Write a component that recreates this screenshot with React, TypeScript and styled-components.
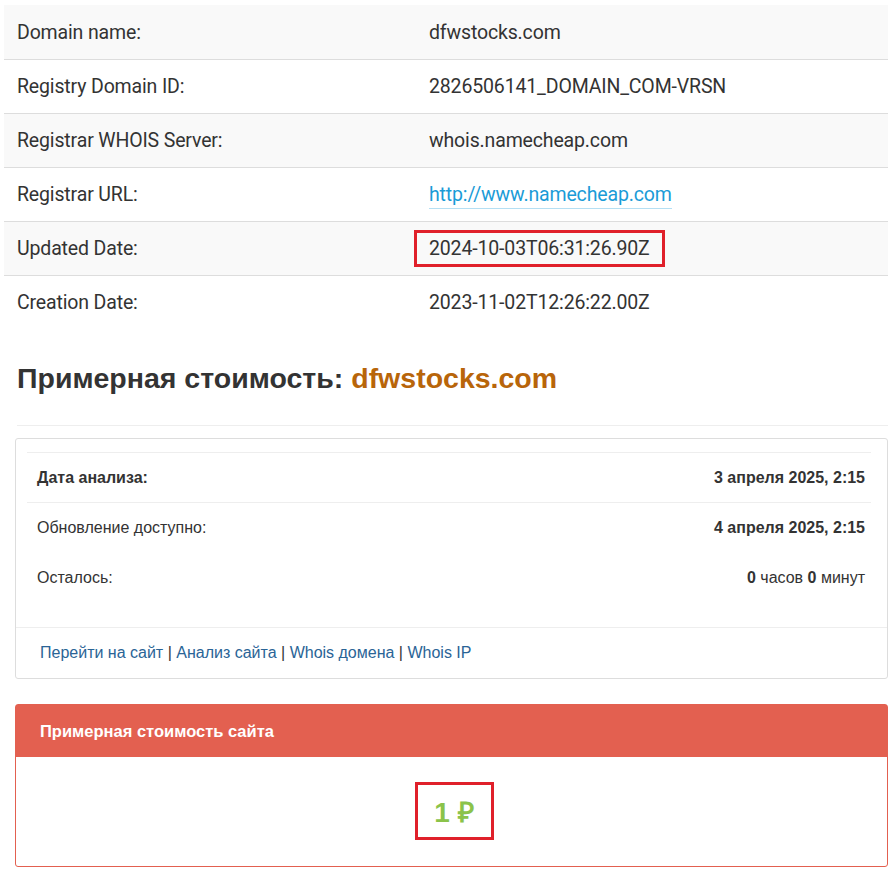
import React from "react";
import styled, { createGlobalStyle } from "styled-components";

const Global = createGlobalStyle`
  body { margin: 0; background: #fff; font-family: Roboto, "Liberation Sans", sans-serif; }
`;
const Page = styled.div`padding: 5px 0 0 4px; width: 884px;`;
const Table = styled.div`display: flex; flex-direction: column;`;
const Row = styled.div<{ $alt: boolean; $first: boolean }>`
  display: grid; grid-template-columns: 412px 1fr; align-items: center;
  height: 54px; padding-left: 13px; background: ${p => (p.$alt ? "#f9f9f9" : "#fff")};
  border-top: ${p => (p.$first ? "none" : "1px solid #dddddd")};
  font-size: 19.5px; letter-spacing: -0.15px; color: #333; box-sizing: border-box;
`;
const Val = styled.span<{ $hl?: boolean }>`
  justify-self: start; padding: 4px 12px 4px 12px; margin-left: -15px;
  border: 3px solid ${p => (p.$hl ? "#e0202a" : "transparent")};
`;
const Link = styled.a`color: #1a9bd7; text-decoration: none; border-bottom: 1px solid #b5dff3; padding-bottom: 2px;`;
const H2 = styled.h2`
  margin: 33px 0 0 13px; font-family: "Liberation Sans", Arial, sans-serif; font-size: 28.5px;
  font-weight: 700; color: #333; padding-bottom: 30px; border-bottom: 1px solid #eee;
`;
const Orange = styled.span`color: #b8650a;`;
const Box = styled.div`
  margin: 12px 0 0 11px; border: 1px solid #ddd; border-radius: 3px;
  font-family: "Liberation Sans", Arial, sans-serif; font-size: 16px; color: #333;
`;
const Inner = styled.div`padding: 13px 16px 25px 11px;`;
const IRow = styled.div<{ $line: boolean }>`
  display: flex; justify-content: space-between; align-items: center; height: 49px;
  padding: 0 6px 0 10px; border-top: 1px solid ${p => (p.$line ? "#eee" : "transparent")};
`;
const Footer = styled.div`border-top: 1px solid #eee; padding: 16px 24px 16px; color: #333;`;
const FLink = styled.a`color: #2a6496; text-decoration: none;`;
const Panel = styled.div`
  margin: 25px 0 0 11px; border: 1px solid #e36050; border-radius: 3px;
  font-family: "Liberation Sans", Arial, sans-serif;
`;
const PHead = styled.div`
  background: #e36050; color: #fff; font-weight: 700; font-size: 16.5px;
  height: 52px; display: flex; align-items: center; padding-left: 24px;
`;
const PBody = styled.div`display: flex; justify-content: center; padding: 25px 0 26px 0;`;
const Price = styled.div`
  border: 3px solid #e0202a; color: #8bc34a; font-size: 28px; font-weight: 700;
  width: 73px; height: 52px; box-sizing: content-box; display: flex; align-items: center;
  justify-content: center; margin-left: 5px;
`;

const rows: [string, string, "link" | "hl" | ""][] = [
  ["Domain name:", "dfwstocks.com", ""],
  ["Registry Domain ID:", "2826506141_DOMAIN_COM-VRSN", ""],
  ["Registrar WHOIS Server:", "whois.namecheap.com", ""],
  ["Registrar URL:", "http://www.namecheap.com", "link"],
  ["Updated Date:", "2024-10-03T06:31:26.90Z", "hl"],
  ["Creation Date:", "2023-11-02T12:26:22.00Z", ""],
];

export default function App() {
  return (
    <Page>
      <Global />
      <Table>
        {rows.map(([k, v, t], i) => (
          <Row key={k} $alt={i % 2 === 0} $first={i === 0}>
            <span>{k}</span>
            <Val $hl={t === "hl"}>{t === "link" ? <Link href="#">{v}</Link> : v}</Val>
          </Row>
        ))}
      </Table>
      <H2>Примерная стоимость: <Orange>dfwstocks.com</Orange></H2>
      <Box>
        <Inner>
          <IRow $line><b>Дата анализа:</b><b>3 апреля 2025, 2:15</b></IRow>
          <IRow $line>Обновление доступно:<b>4 апреля 2025, 2:15</b></IRow>
          <IRow $line={false}>Осталось:<span><b>0</b> часов <b>0</b> минут</span></IRow>
        </Inner>
        <Footer>
          <FLink href="#">Перейти на сайт</FLink> | <FLink href="#">Анализ сайта</FLink> | <FLink href="#">Whois домена</FLink> | <FLink href="#">Whois IP</FLink>
        </Footer>
      </Box>
      <Panel>
        <PHead>Примерная стоимость сайта</PHead>
        <PBody><Price>1 ₽</Price></PBody>
      </Panel>
    </Page>
  );
}
